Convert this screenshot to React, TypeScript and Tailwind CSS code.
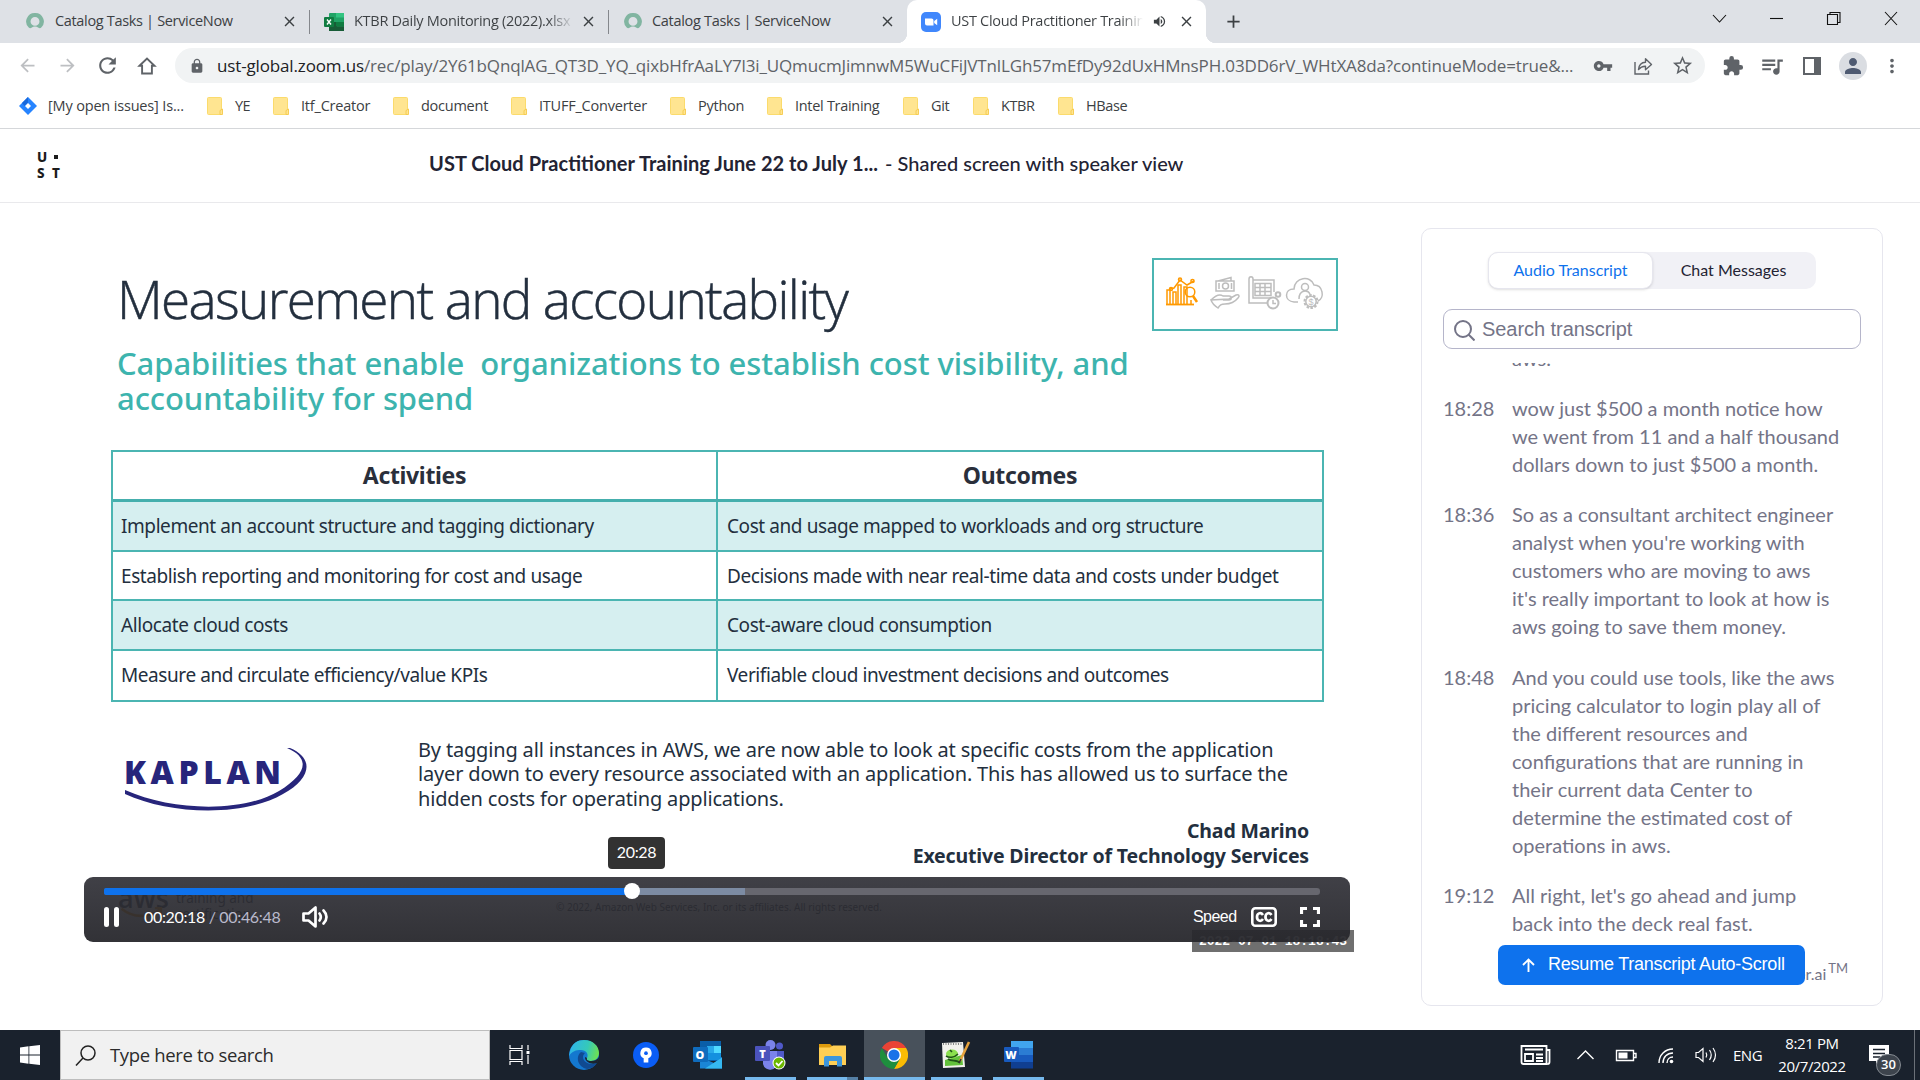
import React from "react";
import {
  MdArrowBack, MdArrowForward, MdRefresh, MdLock, MdVpnKey, MdStarBorder,
  MdExtension, MdQueueMusic, MdPerson, MdMoreVert, MdVolumeUp, MdClose, MdAdd,
} from "react-icons/md";

/* ---------- browser chrome ---------- */

function ServiceNowIcon() {
  return (
    <svg viewBox="0 0 20 20" className="h-[19px] w-5 shrink-0">
      <path d="M10 1a9 9 0 0 0-6.6 15.4c.8.9 2 .9 2.9.3a6.200 6.200 0 0 1 7.400 0c.9.6 2.100.6 2.900-.3A9 9 0 0 0 10 1zm0 13.600a4.700 4.700 0 1 1 0-9.400 4.700 4.700 0 0 1 0 9.400z" fill="#81b5a1" />
    </svg>
  );
}

function ExcelIcon() {
  return (
    <svg viewBox="0 0 20 18" className="h-[18px] w-5 shrink-0">
      <rect x="5" y="0" width="15" height="18" rx="1" fill="#21a366" />
      <rect x="12" y="0" width="8" height="4.500" fill="#33c481" />
      <rect x="5" y="9" width="8" height="9" fill="#185c37" />
      <rect x="12" y="9" width="8" height="4.500" fill="#107c41" />
      <rect x="12" y="13.500" width="8" height="4.500" fill="#185c37" />
      <rect x="0" y="4" width="10" height="10" rx="1" fill="#107c41" />
      <path d="M3 6.500l4 5M7 6.500l-4 5" stroke="#fff" strokeWidth="1.400" />
    </svg>
  );
}

function ZoomIcon() {
  return (
    <svg viewBox="0 0 20 20" className="h-5 w-5 shrink-0">
      <rect width="20" height="20" rx="5" fill="#4087fc" />
      <path d="M4 6.500h6.500a2 2 0 0 1 2 2v5H6a2 2 0 0 1-2-2zM13.200 9l3-2.200v6.400l-3-2.200z" fill="#fff" />
    </svg>
  );
}

const tabText = "overflow-hidden whitespace-nowrap pb-[2px] font-['Open_Sans'] text-[14.5px] leading-5 text-[#3c4043]";

function TabStrip() {
  return (
    <div className="flex h-[43px] bg-[#dee1e6] text-[#3c4043]">
      <div className="flex w-[310px] items-center border-[#80868b] pl-[25px]">
        <ServiceNowIcon />
        <span className={tabText + " ml-[10px] w-[220px] tracking-[-0.33px]"}>Catalog Tasks | ServiceNow</span>
        <MdClose className="ml-1.5 size-[17px]" />
        <span className="ml-[11px] h-6 w-px bg-[#84878c]" />
      </div>
      <div className="flex w-[299px] items-center pl-[14px]">
        <ExcelIcon />
        <span className={tabText + " ml-2.5 w-[220px] bg-linear-to-r from-[#3c4043] from-88% to-transparent bg-clip-text tracking-[-0.28px] text-transparent"}>KTBR Daily Monitoring (2022).xlsx</span>
        <MdClose className="ml-[6px] size-[17px]" />
        <span className="ml-[11px] h-6 w-px bg-[#84878c]" />
      </div>
      <div className="flex w-[298px] items-center pl-[14px]">
        <ServiceNowIcon />
        <span className={tabText + " ml-[9px] w-[220px] tracking-[-0.3px]"}>Catalog Tasks | ServiceNow</span>
        <MdClose className="ml-[7px] size-[17px]" />
      </div>
      <div className="relative flex w-[299px] items-center rounded-t-[10px] bg-white pl-[14px]">
        <span className="absolute bottom-0 -left-[10px] size-[10px] bg-[radial-gradient(circle_at_0_0,#dee1e6_10px,#fff_10.5px)]" />
        <span className="absolute -right-[10px] bottom-0 size-[10px] bg-[radial-gradient(circle_at_100%_0,#dee1e6_10px,#fff_10.5px)]" />
        <ZoomIcon />
        <span className={tabText + " ml-[10px] w-[192px] bg-linear-to-r from-[#3c4043] from-88% to-transparent bg-clip-text tracking-[-0.3px] text-transparent"}>UST Cloud Practitioner Training Ju</span>
        <MdVolumeUp className="ml-[9px] size-[15px]" />
        <MdClose className="ml-[11px] size-[17px]" />
      </div>
      <div className="flex w-[54px] items-center justify-center"><MdAdd className="size-[21px]" /></div>
      <div className="ml-auto flex h-9 w-[229px] items-center">
        <svg viewBox="0 0 229 36" className="h-9 w-[229px]" fill="none" stroke="#111" strokeWidth="1.100">
          <path d="M22 15l6.500 7 6.500-7" />
          <path d="M79 18.500h13" />
          <path d="M136.500 14.500h10v10h-10zM139 14.500v-2h10v10h-2.500" />
          <path d="M194 12l12 13M206 12l-12 13" />
        </svg>
      </div>
    </div>
  );
}

function Toolbar() {
  return (
    <div className="flex h-[45px] items-center text-[#5f6368]">
      <MdArrowBack className="ml-[17px] size-[21px] text-[#bdbfc2]" />
      <MdArrowForward className="ml-[19px] size-[21px] text-[#bdbfc2]" />
      <MdRefresh className="ml-[17px] size-[25px]" />
      <svg viewBox="0 0 20 20" className="ml-[17px] size-[20px]" fill="none" stroke="currentColor" strokeWidth="1.900">
        <path d="M2.500 9.700L10 2.500l7.500 7.200h-2.600V17.500H5.100V9.700z" />
      </svg>
      <div className="ml-[18px] flex h-[35px] w-[1530px] items-center rounded-full bg-[#f1f3f4] pl-[14px]">
        <MdLock className="size-[16px]" />
        <span className="ml-[12px] w-[1370px] whitespace-nowrap font-['Open_Sans'] text-[17px] tracking-[-0.145px]">
          <span className="text-[#202124]">ust-global.zoom.us</span>/rec/play/2Y61bQnqlAG_QT3D_YQ_qixbHfrAaLY7l3i_UQmucmJimnwM5WuCFiJVTnlLGh57mEfDy92dUxHMnsPH.03DD6rV_WHtXA8da?continueMode=true&amp;...
        </span>
        <MdVpnKey className="ml-[6px] size-[20px]" />
        <svg viewBox="0 0 20 20" className="ml-[20px] size-[20px]" fill="none" stroke="currentColor" strokeWidth="1.400">
          <path d="M2 6v12h13.500v-3.500" />
          <path d="M5.500 13.500c.5-5 3-7 7-7.200V2.800L18.500 8.500l-6 5.200v-3.500c-3-.1-5 .8-7 3.300z" strokeLinejoin="round" />
        </svg>
        <MdStarBorder className="ml-[18px] size-[23px]" />
      </div>
      <MdExtension className="ml-[17px] size-[22px]" />
      <MdQueueMusic className="ml-[15px] size-[26px]" />
      <span className="ml-[18px] h-[18px] w-[18px] border-[2px] border-r-[7px] border-current" />
      <span className="ml-[18px] flex size-7 items-center justify-center rounded-full bg-[#dadde2]"><MdPerson className="size-[24px] text-[#4f5b72]" /></span>
      <MdMoreVert className="ml-[14px] size-[22px]" />
    </div>
  );
}

function Folder() {
  return (
    <svg viewBox="0 0 16 18" className="h-[18px] w-4 shrink-0">
      <rect x="0.500" y="0.500" width="14" height="17" rx="1" fill="#ffe591" stroke="#fbdb6c" />
      <path d="M13 17.500v-4l2.500-1.500v5.500z" fill="#ffe591" stroke="#f5c84b" strokeWidth="0.900" />
    </svg>
  );
}

function Bookmarks() {
  const mark = "flex items-center gap-3 whitespace-nowrap";
  return (
    <div className="flex h-[41px] items-center border-b border-[#d5d7da] pb-[4px] font-['Open_Sans'] text-[14.5px] text-[#3c4043]">
      <div className="ml-[19px] flex w-[188px] items-center gap-[11px] whitespace-nowrap tracking-[-0.17px]">
        <svg viewBox="0 0 18 18" className="size-[18px]">
          <path d="M9 0l9 9-9 9-9-9z" fill="#2684ff" />
          <path d="M9 6l3 3-3 3-3-3z" fill="#fff" />
          <path d="M9 0v5.500L5.500 9 3 6z" fill="#1868db" />
        </svg>
        [My open issues] Is...
      </div>
      <div className={mark + " w-[66px] tracking-[-0.6px]"}><Folder />YE</div>
      <div className={mark + " w-[120px] tracking-[-0.2px]"}><Folder />Itf_Creator</div>
      <div className={mark + " w-[118px] tracking-[-0.25px]"}><Folder />document</div>
      <div className={mark + " w-[159px] tracking-[-0.22px]"}><Folder />ITUFF_Converter</div>
      <div className={mark + " w-[97px] tracking-[-0.25px]"}><Folder />Python</div>
      <div className={mark + " w-[136px] tracking-[-0.3px]"}><Folder />Intel Training</div>
      <div className={mark + " w-[70px] tracking-[-0.3px]"}><Folder />Git</div>
      <div className={mark + " w-[85px] tracking-[-0.4px]"}><Folder />KTBR</div>
      <div className={mark + " tracking-[-0.4px]"}><Folder />HBase</div>
    </div>
  );
}

/* ---------- recording page ---------- */

function PageHeader() {
  return (
    <div className="flex h-[74px] border-b border-[#e9e9ec]">
      <div className="mt-[20px] ml-[37px] grid h-[32px] w-[24px] grid-cols-[15px_9px] font-['Noto_Sans'] text-[13.5px] font-extrabold leading-[16px] text-[#1c1c1c]">
        <span>U</span>
        <span className="mt-[6px] ml-[2px] size-[4px] bg-[#1c1c1c]" />
        <span>S</span>
        <span>T</span>
      </div>
      <div className="mt-[20px] ml-[368px] flex font-['Lato'] text-[20px] leading-7 text-[#232333]">
        <span className="w-[456px] whitespace-nowrap font-bold tracking-[0.04px] [font-feature-settings:'liga']">UST Cloud Practitioner Training June 22 to July 1...</span>
        <span className="whitespace-nowrap font-medium">- Shared screen with speaker view</span>
      </div>
    </div>
  );
}

function PillarIcons() {
  return (
    <svg viewBox="0 0 160 40" className="h-10 w-40" fill="none" strokeWidth="1.500">
      <g stroke="#f90">
        <path d="M1 29V15h3v14M7 29V17h3v12M12 29V10h3v19M18 29V12h3v17M25 29v-4" />
        <path d="M0 29.500h28" strokeWidth="1.800" />
        <path d="M4 14l4-1 6-8 7 5 7-4" />
        <circle cx="14" cy="4.500" r="1.500" /><circle cx="5" cy="14" r="1.500" /><circle cx="26.500" cy="6" r="1.600" />
        <circle cx="24" cy="17" r="4.800" /><path d="M27 21l4 6" strokeWidth="2.500" />
      </g>
      <g stroke="#bdbdbd">
        <path d="M50 6h18v10H50zM52 6l13-3.500v3.500" /><circle cx="59.500" cy="11" r="3" /><path d="M53 8v6M65.500 8v6" />
        <path d="M45 25c5-5 9-6 12-4h6c3 0 3 4 0 4h-6M63 24l7-4c3-1 4 1 2 3-4 5-8 6-13 6-4 0-5 1-7 4-3-2-6-5-7-8z" />
        <path d="M83 4c0-3 4-3 4 0v19h18M83 4v24h18M87 5h21v12" />
        <path d="M89 8.500h16v12H89zM89 12.500h16M89 16.500h16M94 8.500v12M99 8.500v12" />
        <circle cx="107" cy="28" r="5.500" strokeWidth="2" /><path d="M107 25v3.500h3" /><circle cx="112" cy="19.500" r="2.300" strokeWidth="2" />
        <path d="M132 27h-4c-10-1-10-13 0-13 0-12 17-14 20-4 9 0 11 13 4 16" />
        <circle cx="139" cy="12" r="3.500" /><path d="M133 24c0-10 9-9 11-5" />
        <circle cx="145" cy="26.500" r="6.500" strokeWidth="2" strokeDasharray="2.500 1.500" /><circle cx="145" cy="26.500" r="5.200" />
      </g>
      <text x="142.500" y="29.800" fontSize="9" fontFamily="Liberation Sans" fill="#bdbdbd">$</text>
    </svg>
  );
}

const rows = [
  ["Implement an account structure and tagging dictionary", "Cost and usage mapped to workloads and org structure"],
  ["Establish reporting and monitoring for cost and usage", "Decisions made with near real-time data and costs under budget"],
  ["Allocate cloud costs", "Cost-aware cloud consumption"],
  ["Measure and circulate efficiency/value KPIs", "Verifiable cloud investment decisions and outcomes"],
];

function ActivityTable() {
  return (
    <div className="mt-[34px] ml-[27px] w-[1213px] border-2 border-[#4bb5b2] font-['Noto_Sans'] text-[#232f3e]">
      <div className="grid h-[50px] grid-cols-[605px_1fr] border-b-[3px] border-[#45afad] text-center text-[23px] font-bold leading-[47px] tracking-[-0.35px] text-[#2a2f3b]">
        <div className="border-r-[2px] border-[#4bb5b2]">Activities</div>
        <div>Outcomes</div>
      </div>
      {rows.map(([a, b], i) => (
        <div key={a} className={"grid h-[49.500px] grid-cols-[605px_1fr] whitespace-nowrap border-[#4bb5b2] text-[19px] leading-[48px] tracking-[-0.42px] " + (i % 2 ? "" : "bg-[#d6eff0] ") + (i < 3 ? "border-b-2" : "")}>
          <div className="border-r-[2px] border-[#4bb5b2] pl-[8px]">{a}</div>
          <div className="pl-[9px]">{b}</div>
        </div>
      ))}
    </div>
  );
}

function Slide() {
  return (
    <div className="flex h-[745px] w-[1270px] flex-col pt-[21px] text-[#232f3e]">
      <div className="flex h-[96px] shrink-0">
        <div className="mt-[12px] ml-[33px] w-[1035px] whitespace-nowrap font-['Open_Sans'] text-[53px] font-light leading-[73px] tracking-[-1.64px] [-webkit-text-stroke:0.5px_#232f3e]">Measurement and accountability</div>
        <div className="mt-[8px] flex h-[73px] w-[186px] border-2 border-[#4bb5b2] pt-[15px] pl-[12px]"><PillarIcons /></div>
      </div>
      <div className="ml-[33px] whitespace-pre font-['Noto_Sans'] text-[31px] font-medium leading-[35px] tracking-[-0.08px] text-[#3db4ae]">
        {"Capabilities that enable  organizations to establish cost visibility, and\naccountability for spend"}
      </div>
      <ActivityTable />
      <div className="mt-[35px] ml-[40px] flex">
        <div className="relative h-[80px] w-[294px] pt-[16px]">
          <div className="font-['Open_Sans'] text-[32px] font-extrabold leading-[38px] tracking-[4.6px] text-[#27257b]">KAPLAN</div>
          <svg viewBox="0 0 190 70" className="absolute top-[7px] left-0 h-[70px] w-[190px]">
            <path d="M1 46C48 67 118 69 155 47C184 29 186 14 163 4L166 4C190 14 188 34 159 50C120 73 46 71 1 50z" fill="#27257b" />
          </svg>
        </div>
        <div className="mt-[1px] whitespace-pre font-['Noto_Sans'] text-[20px] leading-[24.400px] tracking-[-0.17px]">
          {"By tagging all instances in AWS, we are now able to look at specific costs from the application\nlayer down to every resource associated with an application. This has allowed us to surface the\nhidden costs for operating applications."}
        </div>
      </div>
      <div className="mt-[1px] mr-[45px] text-right font-['Noto_Sans'] text-[19.500px] font-bold leading-[25px] tracking-[-0.16px]">
        <div>Chad Marino</div>
        <div>Executive Director of Technology Services</div>
      </div>
      <div className="mt-[17px] ml-[34px] flex">
        <div className="h-[40px] w-[58px] font-['Open_Sans'] text-[27px] font-semibold leading-[26px]">aws
          <svg viewBox="0 0 50 14" className="-mt-1 h-3 w-12"><path d="M1 2c14 11 32 11 45 1M40 1h7v6" fill="none" stroke="#f90" strokeWidth="3" /></svg>
        </div>
        <div className="w-[380px] pt-[5px] font-['Noto_Sans'] text-[13.500px] leading-[16px]">training and<br />certification</div>
        <div className="pt-[14px] font-['Noto_Sans'] text-[10px] leading-[16px]">© 2022, Amazon Web Services, Inc. or its affiliates. All rights reserved.</div>
      </div>
    </div>
  );
}

function Player() {
  return (
    <div className="absolute top-[648px] left-0 h-[65px] w-[1266px] rounded-[9px] bg-linear-to-b from-[#303037eb] to-[#26262bf1] px-5 pt-[11px]">
      <div className="relative flex h-[7px] w-[1216px] overflow-visible rounded-[3px] bg-[#67676f]">
        <div className="w-[528px] rounded-l-[2px] bg-[#0e72ed]" />
        <div className="w-[113px] bg-[#7c8ba3]" />
        <div className="absolute -top-[5px] left-[520px] size-4 rounded-full bg-white" />
        <div className="absolute -top-[51px] left-[504px] h-8 w-[57px] rounded bg-[#323232] text-center font-['Lato'] text-[16px] leading-[29px] tracking-[-0.3px] text-white">20:28</div>
      </div>
      <div className="mt-[11px] flex h-[21px] items-center text-white">
        <span className="flex h-[20px] w-[15px] justify-between"><i className="w-[5px] rounded-sm bg-white" /><i className="w-[5px] rounded-sm bg-white" /></span>
        <span className="ml-[25px] w-[158px] whitespace-pre font-['Lato'] text-[16px] leading-5 tracking-[-0.34px]">00:20:18<span className="text-[#babacc]"> / 00:46:48</span></span>
        <svg viewBox="0 0 27 22" className="h-[22px] w-[27px]" fill="none" stroke="#fff" strokeWidth="2.700" strokeLinejoin="round">
          <path d="M1.500 7.500h5l7-6v19l-7-6h-5z" />
          <path d="M17.500 7.500c1.500 2 1.500 5 0 7M21.500 4.500c4 4 4 9 0 13" strokeLinecap="round" />
        </svg>
        <span className="ml-[864px] w-[58px] font-['Liberation_Sans'] text-[16px] tracking-[-0.55px]">Speed</span>
        <svg viewBox="0 0 26 20" className="h-5 w-[26px]" fill="none" stroke="#fff" strokeWidth="2.600">
          <rect x="1.300" y="1.300" width="23.400" height="17.400" rx="3" />
          <path d="M12 8c-2.500-3.500-6-1.500-6 2s3.500 5.500 6 2M20.500 8c-2.500-3.500-6-1.500-6 2s3.500 5.500 6 2" strokeWidth="2.700" />
        </svg>
        <svg viewBox="0 0 20 20" className="ml-[23px] size-5" fill="none" stroke="#fff" strokeWidth="3.200">
          <path d="M1.500 7V1.500H7M13 1.500h5.500V7M18.500 13v5.500H13M7 18.500H1.500V13" />
        </svg>
      </div>
    </div>
  );
}

const lines: [string, string[]][] = [
  ["18:28", ["wow just $500 a month notice how", "we went from 11 and a half thousand", "dollars down to just $500 a month."]],
  ["18:36", ["So as a consultant architect engineer", "analyst when you're working with", "customers who are moving to aws", "it's really important to look at how is", "aws going to save them money."]],
  ["18:48", ["And you could use tools, like the aws", "pricing calculator to login play all of", "the different resources and", "configurations that are running in", "their current data Center to", "determine the estimated cost of", "operations in aws."]],
  ["19:12", ["All right, let's go ahead and jump", "back into the deck real fast."]],
];

function Transcript() {
  return (
    <div className="relative mt-[25px] ml-[67px] flex h-[778px] w-[462px] flex-col rounded-[10px] border border-[#e6e6ee] px-[21px] font-['Lato']">
      <div className="mt-[23px] flex h-[37px] w-[328px] self-center rounded-[10px] bg-[#f1f1f6] text-center text-[16px] leading-[36px]">
        <div className="w-[165px] rounded-[10px] border border-[#e6e6ee] bg-white leading-[34px] text-[#0e72ed] shadow-sm">Audio Transcript</div>
        <div className="w-[161px] text-[#232333]">Chat Messages</div>
      </div>
      <div className="mt-[20px] flex h-[40px] shrink-0 items-center rounded-[9px] border border-[#b5b5ca] pl-[10px]">
        <svg viewBox="0 0 21 21" className="mt-0.5 size-[21px]" fill="none" stroke="#747487" strokeWidth="2">
          <circle cx="9" cy="9" r="8" /><path d="M14.500 14.500l6 6" />
        </svg>
        <span className="ml-[7px] font-['Liberation_Sans'] text-[20px] tracking-[-0.05px] text-[#747487]">Search transcript</span>
      </div>
      <div className="mt-[14px] flex h-[600px] flex-col overflow-hidden text-[20px] leading-[28px] text-[#747487]">
        <div className="-mt-[19px] ml-[69px] h-[27px] shrink-0">aws.</div>
        {lines.map(([time, text]) => (
          <div key={time} className="mt-[22.500px] flex shrink-0">
            <div className="w-[69px]">{time}</div>
            <div className="whitespace-pre">{text.join("\n")}</div>
          </div>
        ))}
      </div>
      <div className="absolute top-[733px] right-[34px] flex text-[16px] leading-6 text-[#747487]">er.ai<sup className="-top-[6px] ml-[2px] text-[13px] leading-6">TM</sup></div>
      <div className="absolute top-[716px] left-[76px] flex h-10 w-[307px] items-center rounded-[7px] bg-[#0e72ed] text-white">
        <svg viewBox="0 0 13 14" className="ml-[24px] h-[14px] w-[13px]" fill="none" stroke="#fff" strokeWidth="1.900"><path d="M6.500 14V1.500M1 7l5.500-5.500L12 7" /></svg>
        <span className="ml-[13px] pb-0.5 font-['Liberation_Sans'] text-[18px] tracking-[-0.22px]">Resume Transcript Auto-Scroll</span>
      </div>
    </div>
  );
}

/* ---------- taskbar ---------- */

function EdgeIcon() {
  return (
    <svg viewBox="0 0 30 30" className="size-[30px]">
      <defs>
        <linearGradient id="edgeTop" x1="0" x2="1" y1="0.300" y2="0.500"><stop offset="0" stopColor="#2eb4ec" /><stop offset="0.600" stopColor="#35c9b9" /><stop offset="1" stopColor="#6ee052" /></linearGradient>
      </defs>
      <circle cx="15" cy="15" r="15" fill="#1478cf" />
      <path d="M1 11C3 3 9 0 15 0c9 0 15 6 15 13 0 5-4 8-8 8-3 0-5-1-4-3 2-4-1-8-6-8C7 10 3 11 0 16z" fill="url(#edgeTop)" />
      <path d="M12 12c-6 5-3 15 6 17 4 0 8-3 10-6-7 3-14-1-14-6 0-2 1-3 2-4z" fill="#104a91" />
      <path d="M18 18c-1 2 1 3 4 3 3 0 6-1 8-4 0 3-1 4-2 6-6 2-12-1-12-6z" fill="#1b232e" />
    </svg>
  );
}

function SourcetreeIcon() {
  return (
    <svg viewBox="0 0 28 28" className="size-[26px]">
      <circle cx="14" cy="14" r="14" fill="#0a5df5" />
      <path d="M14 6a6 6 0 0 0-2.500 11.500V22h5v-4.500A6 6 0 0 0 14 6z" fill="#fff" /><circle cx="14" cy="12" r="2" fill="#0a5df5" />
    </svg>
  );
}

function LetterTile({ letter, className }: { letter: string; className: string }) {
  return <span className={"absolute left-0 flex size-[15px] items-center justify-center rounded-[1px] font-['Open_Sans'] text-[11px] font-extrabold leading-none text-white " + className}>{letter}</span>;
}

function OutlookIcon() {
  return (
    <span className="relative block h-[28px] w-[29px]">
      <svg viewBox="0 0 29 28" className="h-[28px] w-[29px]">
        <rect x="7" y="0" width="21" height="20" fill="#0a5ea8" /><rect x="14" y="5" width="7" height="7" fill="#28a8ea" /><rect x="21" y="5" width="7" height="7" fill="#50d9ff" /><rect x="14" y="12" width="14" height="7" fill="#1490df" />
        <path d="M7 27.500V16l14 6 8-6v11.500z" fill="#1a85d6" /><path d="M12 27.500l17-11v11z" fill="#35b8f1" />
      </svg>
      <LetterTile letter="O" className="top-[6px] bg-[#0f6cbd]" />
    </span>
  );
}

function TeamsIcon() {
  return (
    <span className="relative block h-[30px] w-[31px]">
      <svg viewBox="0 0 31 30" className="h-[30px] w-[31px]">
        <circle cx="15.500" cy="5" r="5" fill="#7b83eb" /><circle cx="24.500" cy="6" r="3.500" fill="#5059c9" />
        <path d="M20 11h9v8a6 6 0 0 1-9 4z" fill="#5059c9" /><path d="M8 11h14v10a7 7 0 0 1-14 3z" fill="#7b83eb" />
        <circle cx="24" cy="23" r="6.500" fill="#fff" /><circle cx="24" cy="23" r="5.500" fill="#6bb700" /><path d="M21 23l2.500 2.500 4-4.500" fill="none" stroke="#fff" strokeWidth="1.800" />
      </svg>
      <LetterTile letter="T" className="top-[6px] bg-[#4b53bc]" />
    </span>
  );
}

function ExplorerIcon() {
  return (
    <svg viewBox="0 0 28 24" className="h-[24px] w-[28px]">
      <path d="M0 1h11l3 3v5H0z" fill="#dc9a0c" /><path d="M0 4.500h11l3-2h13V22H0z" fill="#ffcf54" />
      <path d="M5 23.500V15q0-2 2-2h14q2 0 2 2v8.500h-5V18h-8v5.500z" fill="#3d96dc" />
    </svg>
  );
}

function ChromeIcon() {
  return (
    <svg viewBox="0 0 48 48" className="size-[28px]">
      <path d="M24 24L3.200 12A24 24 0 0 1 44.800 12z" fill="#ea4335" />
      <path d="M24 12h20.800a24 24 0 0 1-20.800 36l10.400-18z" fill="#fbbc04" />
      <path d="M13.600 30L3.200 12a24 24 0 0 0 20.800 36l10.400-18z" fill="#1e8e3e" />
      <circle cx="24" cy="24" r="12" fill="#fff" /><circle cx="24" cy="24" r="9.500" fill="#1a73e8" />
    </svg>
  );
}

function NotepadIcon() {
  return (
    <svg viewBox="0 0 30 28" className="h-[28px] w-[30px]">
      <path d="M1 2l21-1 2 25-22 1z" fill="#f1f1ec" /><path d="M2 3h20" stroke="#888" strokeWidth="2" strokeDasharray="1 1.500" />
      <path d="M4 19l17-5 1 10-18 1z" fill="#63c23c" /><ellipse cx="11" cy="13" rx="6" ry="4.500" fill="#8be04e" />
      <path d="M5 15c3 2 8 2 12-2M7 18c4 3 9 0 12 4M9 9l2 2" stroke="#1f5417" strokeWidth="1.600" fill="none" />
      <path d="M28 1L19 20" stroke="#e6a23c" strokeWidth="2.600" /><path d="M20 18l-2 4" stroke="#333" strokeWidth="1.500" />
    </svg>
  );
}

function WordIcon() {
  return (
    <span className="relative block h-[28px] w-[29px]">
      <svg viewBox="0 0 29 28" className="h-[28px] w-[29px]">
        <rect x="7" y="0" width="22" height="7" fill="#41a5ee" /><rect x="7" y="7" width="22" height="7" fill="#2b7cd3" /><rect x="7" y="14" width="22" height="7" fill="#185abd" /><rect x="7" y="21" width="22" height="6.500" fill="#103f91" />
      </svg>
      <LetterTile letter="W" className="top-[6px] bg-[#185abd]" />
    </span>
  );
}

function Taskbar() {
  const app = "flex h-[50px] items-center justify-center border-b-[3px] pt-[2px]";
  return (
    <div className="flex h-[50px] items-center bg-[#1a222d] font-['Open_Sans'] text-white">
      <div className="flex w-[60px] justify-center">
        <svg viewBox="0 0 20 20" className="size-5"><path d="M0 2.500l8.500-1.200v8.300H0zM9.300 1.200L20 0v9.600H9.300zM0 10.400h8.500v8.300L0 17.500zM9.300 10.400H20V20L9.300 18.800z" fill="#fff" /></svg>
      </div>
      <div className="flex h-[50px] w-[430px] items-center border border-[#bdbdbd] bg-[#f1f1f1] pl-[14px] text-[#2b2b2b]">
        <svg viewBox="0 0 21 21" className="size-[21px]" fill="none" stroke="#222" strokeWidth="1.500"><circle cx="13" cy="8" r="7" /><path d="M8 13l-7 7.500" /></svg>
        <span className="ml-[14px] text-[18.500px] tracking-[-0.35px]">Type here to search</span>
      </div>
      <div className="flex w-[63px] justify-center pr-[4px]">
        <svg viewBox="0 0 21 20" className="h-5 w-[21px]" fill="none" stroke="#fff" strokeWidth="1.200"><path d="M1 0v3.500h12V0M1 5.500h12v9H1zM1 20v-3.500h12V20M19 0v5M19 10v9" /><path d="M17.500 6h3v3h-3z" fill="#fff" stroke="none" /></svg>
      </div>
      <div className={app + " w-[62px] border-transparent"}><EdgeIcon /></div>
      <div className={app + " w-[61px] border-transparent"}><SourcetreeIcon /></div>
      <div className={app + " mr-[7px] w-[62px] border-transparent"}><OutlookIcon /></div>
      <div className={app + " mr-[11px] w-[51px] border-[#76b9ed]"}><TeamsIcon /></div>
      <div className={app + " relative mr-[6px] w-[51px] border-[#76b9ed]"}><ExplorerIcon /><span className="absolute right-0 -bottom-[3px] h-[3px] w-[11px] bg-[#5580a5]" /></div>
      <div className={app + " mr-[6px] w-[61px] border-[#76b9ed] bg-[#48515b]"}><span className="-ml-px"><ChromeIcon /></span></div>
      <div className={app + " mr-[11px] w-[51px] border-[#76b9ed] pr-[2px]"}><NotepadIcon /></div>
      <div className={app + " w-[51px] border-[#76b9ed] pr-px"}><WordIcon /></div>
      <div className="ml-auto flex h-[50px] w-[400px] items-center">
        <svg viewBox="0 0 210 50" className="h-[50px] w-[210px] shrink-0" fill="none" stroke="#fff" strokeWidth="1.400">
          <path d="M1.500 16h25v18h-23q-2 0-2-2zM26.500 20h3v12q0 2-2 2M5 19.500h18M5 24h8v7H5zM16 24.500h7M16 28h7M16 31h7" strokeWidth="1.800" />
          <path d="M57.500 29l8-8 8 8" />
          <path d="M96.500 20.500h17v10h-17zM114 23.500h2v4h-2" /><path d="M98.500 22.500h9v6h-9z" fill="#fff" stroke="none" />
          <path d="M139 33c0-8 6-14 14-14M143 33c0-6 4-10 10-10M147 33c0-3.500 2.500-6 6-6" /><circle cx="151.500" cy="31.500" r="1.800" fill="#fff" stroke="none" />
          <path d="M176 22.500h2.500l4.500-4v13l-4.500-4H176zM186 22.500q1.500 2.500 0 5M189.500 20q3.500 5 0 10M193 18q5 7 0 14" strokeWidth="1.200" />
        </svg>
        <span className="ml-[3px] w-[41px] text-[15px] tracking-[-0.5px]">ENG</span>
        <div className="ml-px w-[74px] text-center text-[15px] leading-[23px] tracking-[-0.4px]"><div>8:21 PM</div><div>20/7/2022</div></div>
        <div className="relative ml-[20px] h-[30px] w-[45px]">
          <svg viewBox="0 0 20 21" className="mt-[5px] h-[21px] w-5"><path d="M0 0h20v16H10l-3 3v-3H0z" fill="#fff" /><path d="M4 4.500h12M4 8.500h12M4 12h7" stroke="#1a222d" strokeWidth="1.300" /></svg>
          <span className="absolute top-[14px] left-[7px] flex h-[22px] w-[25px] items-center justify-center rounded-full border border-[#858b92] bg-[#3d444d] text-[13px] font-semibold">30</span>
        </div>
        <span className="h-[50px] w-px bg-[#6b7178]" />
      </div>
    </div>
  );
}

export default function App() {
  return (
    <div className="flex h-[1080px] w-[1920px] flex-col overflow-hidden bg-white">
      <TabStrip />
      <Toolbar />
      <Bookmarks />
      <PageHeader />
      <div className="flex h-[827px]">
        <div className="relative mt-[26px] ml-[84px] h-[760px] w-[1270px]">
          <Slide />
          <div className="absolute top-[701px] right-0 h-[22px] w-[162px] bg-[#6f6f6f] text-center font-['Liberation_Mono'] text-[13px] font-bold leading-[24px] text-white">2022-07-01 18:18:43</div>
          <Player />
        </div>
        <Transcript />
      </div>
      <Taskbar />
    </div>
  );
}
